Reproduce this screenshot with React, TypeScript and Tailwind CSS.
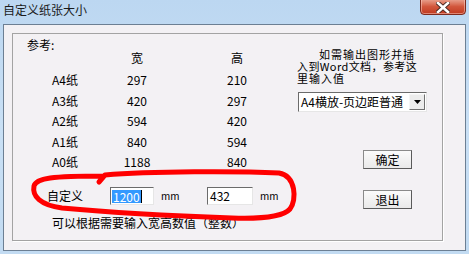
import React from 'react';

const rows = [
  { name: 'A4纸', w: '297', h: '210' },
  { name: 'A3纸', w: '420', h: '297' },
  { name: 'A2纸', w: '594', h: '420' },
  { name: 'A1纸', w: '840', h: '594' },
  { name: 'A0纸', w: '1188', h: '840' },
];

const font = "font-['Noto_Sans_CJK_SC',sans-serif]";

// classic sunken edit box
const sunken =
  'border-t border-l border-t-[#6b6b6b] border-l-[#6b6b6b] border-b border-r border-b-[#e6e6e6] border-r-[#e6e6e6] bg-white';

const Button = ({ label, className = '' }: { label: string; className?: string }) => (
  <div
    className={`flex h-[19px] w-[49px] items-center justify-center border border-[#8a8a8a] border-b-[#5a5a5a] border-r-[#5a5a5a] bg-linear-to-b from-[#fbfbfb] to-[#e9e9e9] text-[12px] leading-[12px] text-black ${className}`}
  >
    {label}
  </div>
);

export default function App() {
  return (
    <div
      className={`relative flex h-[254px] w-[469px] flex-col overflow-hidden bg-linear-to-b from-[#bcd7f1] via-[#c9e0f5] to-[#c2dbf2] ${font} text-black`}
    >
      {/* title bar */}
      <div className="relative h-[24px] shrink-0">
        <div className="pl-[3px] pt-[4px] text-[12px] leading-[12px] text-[#1b1b1b]">自定义纸张大小</div>
        <div className="absolute right-[3px] top-[-2px] flex h-[17px] w-[46px] items-center justify-center rounded-b-[4px] border border-[#7e2a1d] bg-linear-to-b from-[#e9a593] via-[#d2573d] to-[#c0391f] shadow-[inset_0_0_0_1px_rgba(255,210,200,0.5)]">
          <svg width="14" height="11" viewBox="0 0 14 11" className="mt-[2px]">
            <path d="M2 1 L12 10 M12 1 L2 10" stroke="#4a2a25" strokeWidth="4.4" strokeLinecap="square" />
            <path d="M2 1 L12 10 M12 1 L2 10" stroke="#ffffff" strokeWidth="2.6" strokeLinecap="square" />
          </svg>
        </div>
      </div>

      {/* client area */}
      <div className="mx-[3px] h-[227px] shrink-0 border border-[#6c7f93] bg-[#f3f1f4]">
        <div className="ml-[8px] mt-[8px] flex h-[208px] w-[431px] border border-[#a3a3a3] shadow-[1px_1px_0_#ffffff]">
          {/* left: reference table + custom row */}
          <div className="w-[284px] shrink-0 pt-[4px] text-[12px] leading-[12px]">
            <div className="flex h-[14px] items-center pl-[14px]">参考:</div>
            <div className="grid h-[12px] grid-cols-[39px_45px_80px_20px_80px] items-center">
              <div />
              <div />
              <div className="text-center">宽</div>
              <div />
              <div className="text-center">高</div>
            </div>
            <div className="mt-[6px]">
              {rows.map((r) => (
                <div key={r.name} className="grid h-[20.5px] grid-cols-[39px_45px_80px_20px_80px] items-center">
                  <div />
                  <div>{r.name}</div>
                  <div className="text-center">{r.w}</div>
                  <div />
                  <div className="text-center">{r.h}</div>
                </div>
              ))}
            </div>
            <div className="mt-[14.5px] flex h-[18px] items-center pl-[34px]">
              <div className="w-[36px] text-[12px]">自定义</div>
              <div className={`ml-[27px] flex h-[18px] w-[44px] items-center pl-[1px] ${sunken}`}>
                <span className="bg-[#3399ff] px-[1px] text-[12px] leading-[13px] text-white">1200</span>
                <span className="h-[13px] w-px bg-black" />
              </div>
              <div className="ml-[7px] w-[12px] text-[10px]">mm</div>
              <div className={`ml-[34px] flex h-[18px] w-[46px] items-center pl-[2px] ${sunken}`}>
                <span className="text-[12px]">432</span>
              </div>
              <div className="ml-[7px] text-[10px]">mm</div>
            </div>
            <div className="mt-[11.5px] h-[12px] pl-[39px]">可以根据需要输入宽高数值（整数）</div>
          </div>

          {/* right: hint, select, buttons */}
          <div className="flex flex-col pt-[15px] text-[12px] leading-[12px]">
            <div className="h-[12px] whitespace-nowrap pl-[22px] text-[11px] leading-[11px] tracking-[1px]">如需输出图形并插</div>
            <div className="h-[12px] whitespace-nowrap text-[11px] leading-[11px] tracking-[0.4px]">入到Word文档，参考这</div>
            <div className="h-[12px] whitespace-nowrap text-[11px] leading-[11px] tracking-[1px]">里输入值</div>
            <div
              className={`ml-[1px] mt-[7px] flex h-[20px] w-[129px] items-center justify-between pl-[2px] pr-[1px] ${sunken}`}
            >
              <span className="whitespace-nowrap text-[12px]">A4横放-页边距普通</span>
              <div className="flex h-[16px] w-[16px] items-center justify-center border border-[#f5f5f5] border-b-[#707070] border-r-[#707070] bg-[#ececec]">
                <svg width="7" height="4" viewBox="0 0 7 4">
                  <path d="M0 0 H7 L3.5 4 Z" fill="#000" />
                </svg>
              </div>
            </div>
            <Button label="确定" className="ml-[66px] mt-[38px]" />
            <Button label="退出" className="ml-[66px] mt-[21px]" />
          </div>
        </div>
      </div>

      {/* hand-drawn red mark */}
      <svg className="pointer-events-none absolute left-0 top-0" width="469" height="254" viewBox="0 0 469 254">
        <path
          d="M99 182 L105 175 C150 171 240 171 279 173 C296 176 297 200 290 209 C283 217 262 219 232 218 C175 216 105 212 62 208 C40 205 32 196 34 186 C36 178 52 176 104 176"
          fill="none"
          stroke="#ff0000"
          strokeWidth="5"
          strokeLinecap="round"
          strokeLinejoin="round"
        />
      </svg>
    </div>
  );
}
